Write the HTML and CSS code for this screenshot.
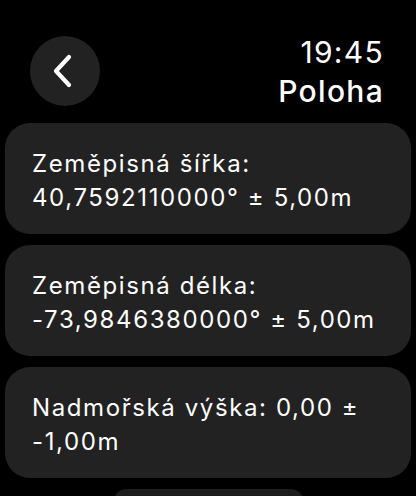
FILE: index.html
```html
<!DOCTYPE html>
<html lang="cs">
<head>
<meta charset="utf-8">
<link rel="stylesheet" href="styles.css">
</head>
<body>
<div class="screen">
  <header class="header">
    <button class="back" aria-label="Zpět">
      <svg width="24" height="34" viewBox="0 0 24 34"><path d="M18 3 L5 17 L18 31" fill="none" stroke="#fff" stroke-width="4.2" stroke-linecap="round" stroke-linejoin="round"/></svg>
    </button>
    <div class="titles">
      <div class="time">19:45</div>
      <div class="title">Poloha</div>
    </div>
  </header>
  <main class="list">
    <div class="card">Zeměpisná šířka:<br>40,7592110000° ± 5,00m</div>
    <div class="card">Zeměpisná délka:<br>-73,9846380000° ± 5,00m</div>
    <div class="card">Nadmořská výška: 0,00 ±<br>-1,00m</div>
    <div class="more"></div>
  </main>
</div>
</body>
</html>
```

FILE: styles.css
```css
html, body {
  margin: 0;
  padding: 0;
  background: #000;
  color: #fff;
  font-family: Inter, "Noto Sans", sans-serif;
}
.screen {
  width: 416px;
  height: 496px;
  overflow: hidden;
}
.header {
  display: flex;
  justify-content: space-between;
  align-items: center;
  padding: 33px 32px 0 30px;
}
.back {
  width: 70px;
  height: 70px;
  border: 0;
  border-radius: 50%;
  background: #222222;
  display: flex;
  align-items: center;
  justify-content: center;
  padding: 0 4px 0 0;
  margin-top: -2px;
}
.back svg { display: block; }
.titles {
  text-align: right;
  font-size: 30px;
  line-height: 39px;
  letter-spacing: 1.3px;
}
.time { font-weight: 400; }
.title { font-weight: 500; }
.list {
  display: flex;
  flex-direction: column;
  align-items: center;
  gap: 11px;
  padding-top: 12px;
}
.card {
  box-sizing: border-box;
  width: 406px;
  height: 111px;
  background: #222222;
  border-radius: 25px;
  padding: 24px 10px 0 27px;
  font-size: 24px;
  line-height: 34px;
  letter-spacing: 1.6px;
  white-space: nowrap;
}
.more {
  width: 191px;
  height: 30px;
  background: #1c1c1c;
  border-radius: 14px;
}
```
